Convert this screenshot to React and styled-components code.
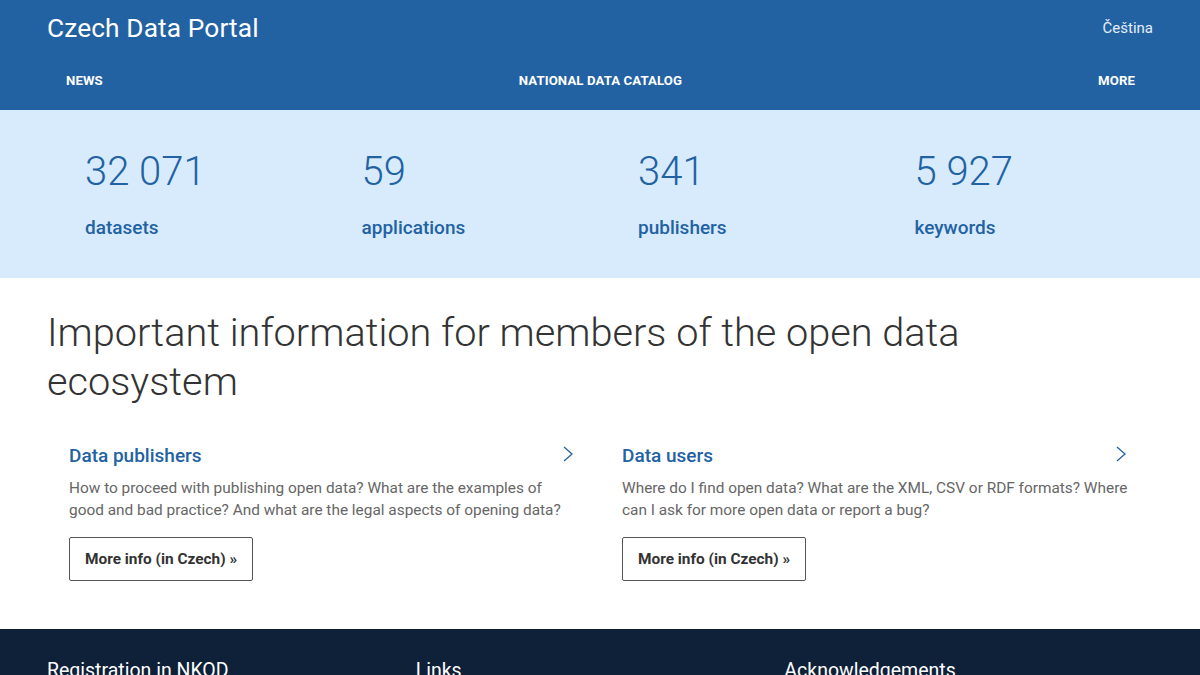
import React from "react";
import styled, { createGlobalStyle } from "styled-components";

const Global = createGlobalStyle`
  * { box-sizing: border-box; }
  body { margin: 0; font-family: Roboto, "Liberation Sans", sans-serif; background: #fff; color: #333; }
`;

const Header = styled.header`
  background: #2262a3;
  color: #fff;
  height: 110px;
  padding: 0 47px;
  display: flex;
  flex-direction: column;
`;

const TopRow = styled.div`
  height: 58px;
  display: flex;
  align-items: center;
  justify-content: space-between;
`;

const Brand = styled.div`
  font-size: 26.3px;
  font-weight: 400;
  letter-spacing: 0.1px;
  margin-top: -2px;
`;

const Lang = styled.div`
  font-size: 15px;
  color: #e6eef7;
  margin-top: -3px;
`;

const Nav = styled.nav`
  flex: 1;
  display: flex;
  align-items: center;
  justify-content: space-between;
  padding: 0 18px 8px 19px;
`;

const NavItem = styled.a`
  font-size: 13.2px;
  font-weight: 700;
  text-transform: uppercase;
  letter-spacing: 0.1px;
  color: #fff;
`;

const Stats = styled.section`
  background: #d8ebfd;
  height: 168px;
  padding: 0 47px;
  display: grid;
  grid-template-columns: repeat(4, 1fr);
`;

const Stat = styled.div`
  padding: 38px 0 0 38px;
  color: #2262a3;
`;

const StatNumber = styled.div`
  font-size: 40px;
  font-weight: 300;
  line-height: 48px;
`;

const StatLabel = styled.div`
  font-size: 19px;
  font-weight: 500;
  margin-top: 20px;
`;

const Main = styled.main`
  padding: 30px 47px 48px;
`;

const Heading = styled.h1`
  margin: 0;
  font-size: 39.7px;
  font-weight: 300;
  line-height: 49px;
  color: #333;
  max-width: 940px;
`;

const Cards = styled.div`
  display: grid;
  grid-template-columns: 1fr 1fr;
  margin-top: 35px;
`;

const Card = styled.div`
  padding: 0 22px 0 22px;
`;

const CardHead = styled.div`
  display: flex;
  justify-content: space-between;
  align-items: center;
`;

const CardTitle = styled.h2`
  margin: 0;
  font-size: 19px;
  font-weight: 500;
  color: #2262a3;
  line-height: 30px;
`;

const Chevron = styled.svg`
  width: 10px;
  height: 16px;
  margin: -4px 5px 0 0;
`;

const CardText = styled.p`
  margin: 6px 0 0;
  font-size: 15.4px;
  line-height: 22px;
  color: #666;
`;

const Button = styled.a`
  display: inline-flex;
  align-items: center;
  margin-top: 16px;
  height: 44px;
  padding: 0 15px;
  border: 1px solid #555;
  border-radius: 2px;
  font-size: 15.4px;
  font-weight: 700;
  color: #333;
`;

const Footer = styled.footer`
  background: #0f2139;
  color: #fff;
  padding: 30px 47px 40px;
  display: grid;
  grid-template-columns: repeat(3, 1fr);
`;

const FooterTitle = styled.h3`
  margin: 0;
  font-size: 19.5px;
  font-weight: 400;
`;

const ChevronIcon = () => (
  <Chevron viewBox="0 0 10 16">
    <path d="M1 1 L9 8 L1 15" fill="none" stroke="#2262a3" strokeWidth="1.3" />
  </Chevron>
);

const stats = [
  ["32 071", "datasets"],
  ["59", "applications"],
  ["341", "publishers"],
  ["5 927", "keywords"],
];

const cards = [
  {
    title: "Data publishers",
    text: "How to proceed with publishing open data? What are the examples of good and bad practice? And what are the legal aspects of opening data?",
  },
  {
    title: "Data users",
    text: "Where do I find open data? What are the XML, CSV or RDF formats? Where can I ask for more open data or report a bug?",
  },
];

export default function App() {
  return (
    <>
      <Global />
      <Header>
        <TopRow>
          <Brand>Czech Data Portal</Brand>
          <Lang>Čeština</Lang>
        </TopRow>
        <Nav>
          <NavItem>News</NavItem>
          <NavItem>National Data Catalog</NavItem>
          <NavItem>More</NavItem>
        </Nav>
      </Header>
      <Stats>
        {stats.map(([n, l]) => (
          <Stat key={l}>
            <StatNumber>{n}</StatNumber>
            <StatLabel>{l}</StatLabel>
          </Stat>
        ))}
      </Stats>
      <Main>
        <Heading>Important information for members of the open data ecosystem</Heading>
        <Cards>
          {cards.map((c) => (
            <Card key={c.title}>
              <CardHead>
                <CardTitle>{c.title}</CardTitle>
                <ChevronIcon />
              </CardHead>
              <CardText>{c.text}</CardText>
              <Button>More info (in Czech) »</Button>
            </Card>
          ))}
        </Cards>
      </Main>
      <Footer>
        <FooterTitle>Registration in NKOD</FooterTitle>
        <FooterTitle>Links</FooterTitle>
        <FooterTitle>Acknowledgements</FooterTitle>
      </Footer>
    </>
  );
}
